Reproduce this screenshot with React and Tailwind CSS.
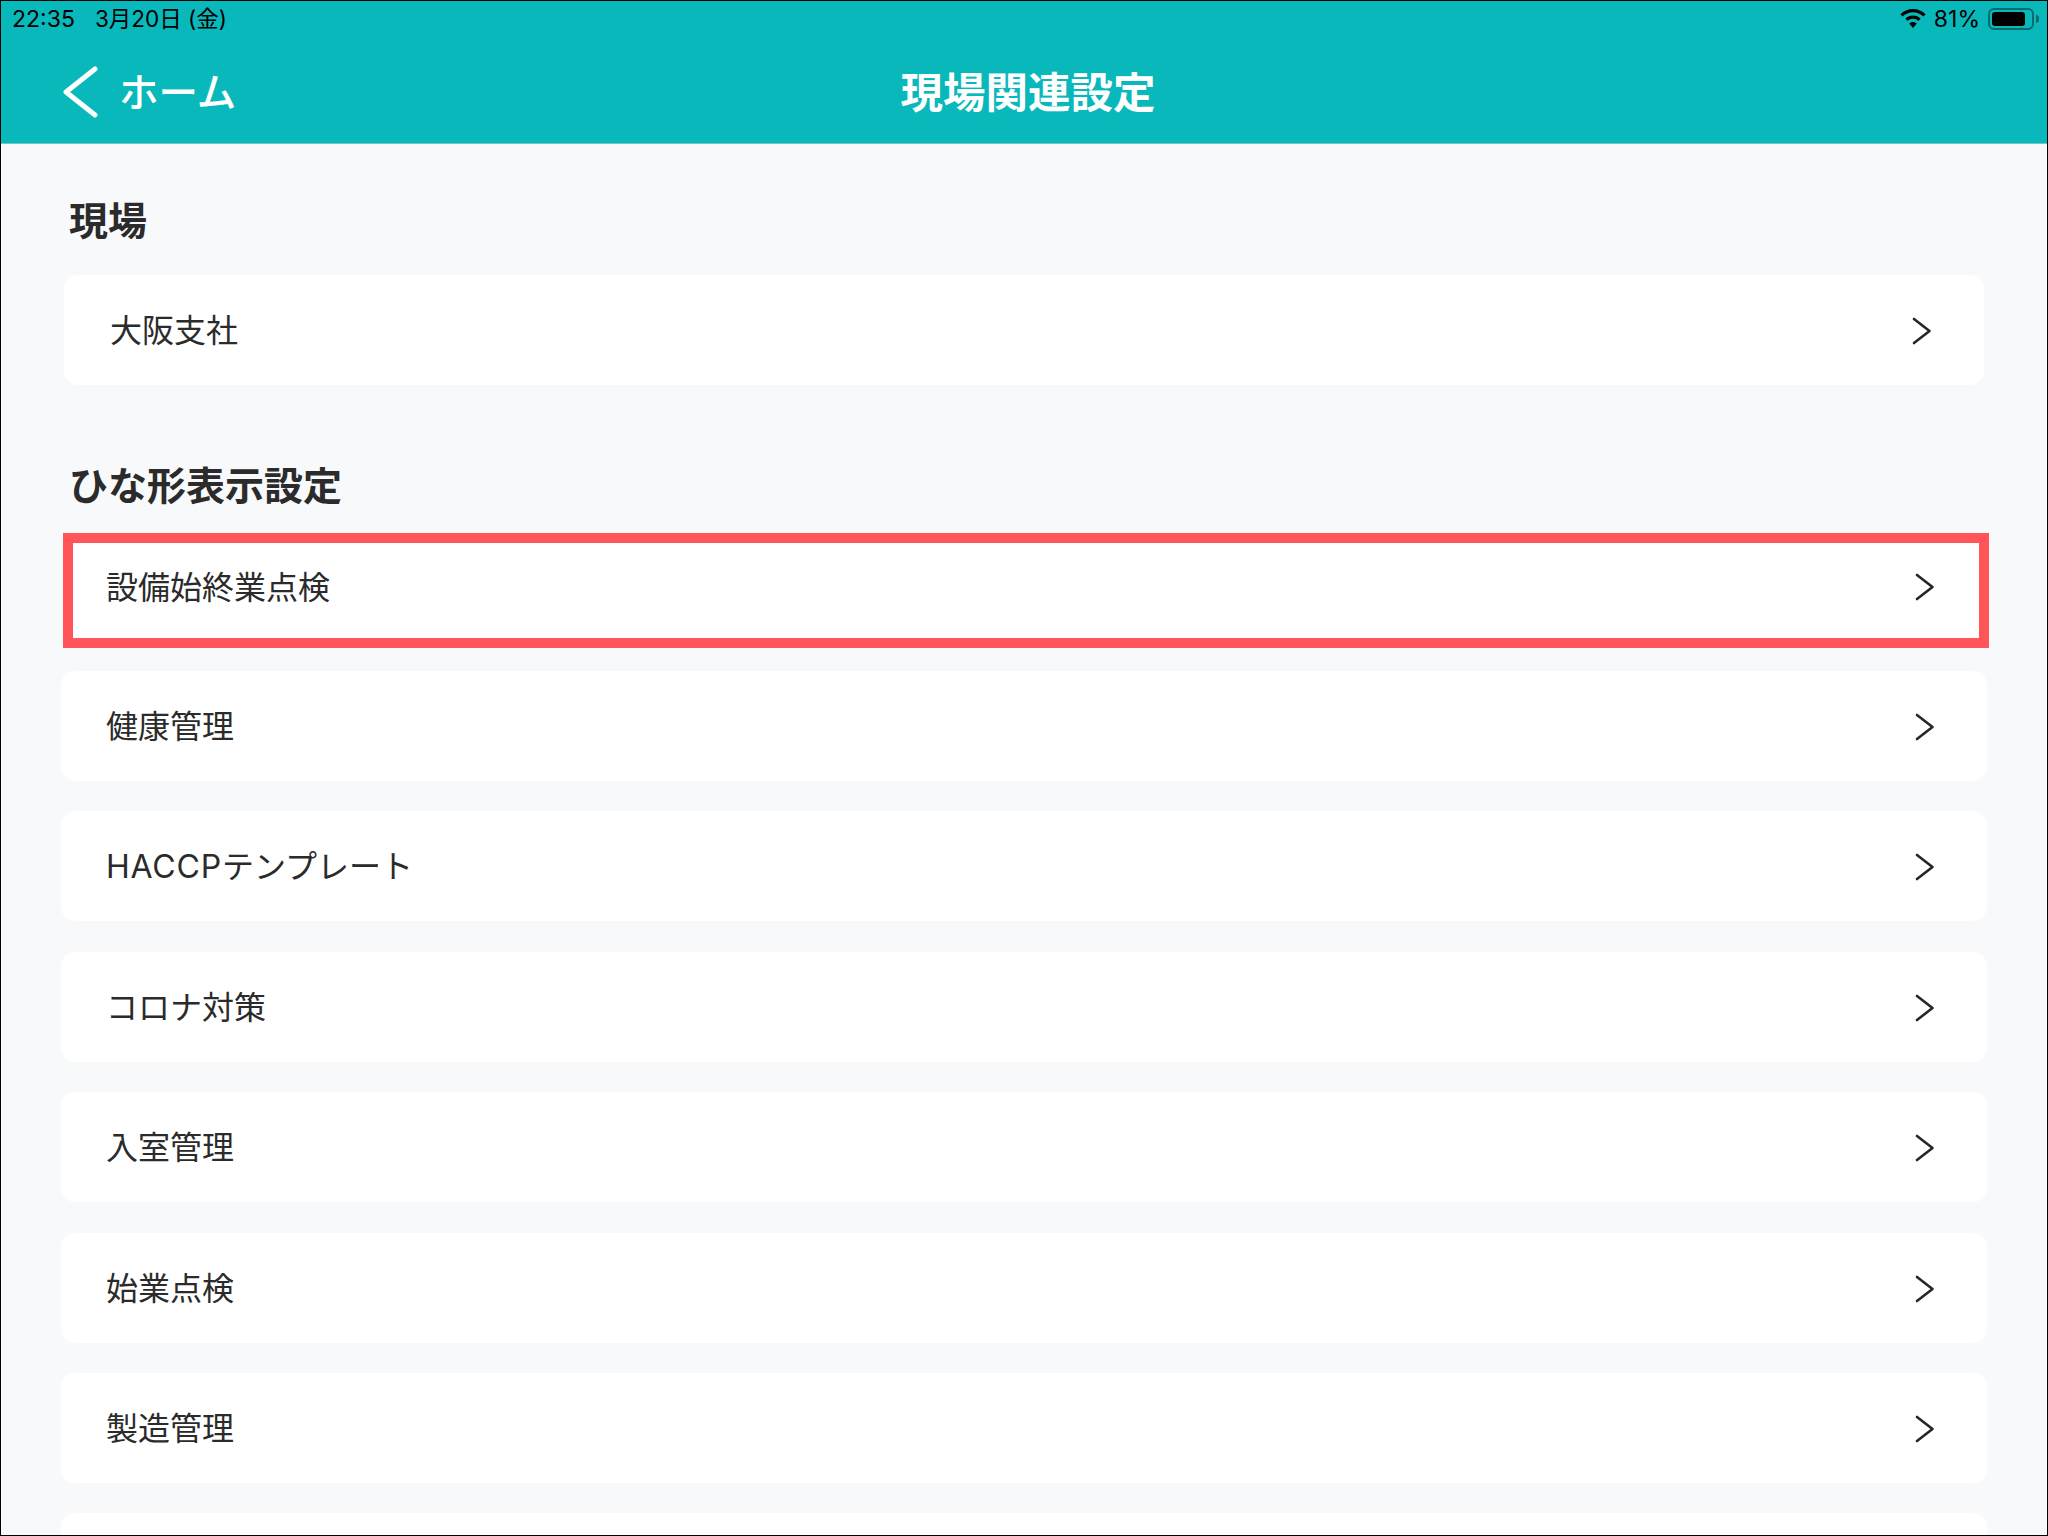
const Chevron = ({ className = "mt-[2px]" }) => (
  <svg width="20" height="28" viewBox="0 0 20 28" fill="none" className={`shrink-0 ${className}`}>
    <path d="M2 2 L17.5 14 L2 26" stroke="#262626" strokeWidth="2.6" strokeLinecap="round" strokeLinejoin="round" />
  </svg>
);

const Row = ({ label, className = "pl-[45px]" }) => (
  <div className={`flex items-center justify-between bg-white rounded-[14px] h-[110px] pr-[52px] ${className}`}>
    <span className="text-[32px] leading-none text-[#2b2b2b] pt-[2px]">{label}</span>
    <Chevron />
  </div>
);

const Wifi = () => (
  <svg width="26" height="20" viewBox="0 0 26 20" fill="#000">
    <path d="M13 0 C18 0 22.4 2 25.6 5.2 L23.4 7.6 C20.7 4.9 17 3.2 13 3.2 C9 3.2 5.3 4.9 2.6 7.6 L0.4 5.2 C3.6 2 8 0 13 0 Z" />
    <path d="M13 6.6 C15.9 6.6 18.6 7.8 20.6 9.7 L18.4 12 C17 10.7 15.1 9.8 13 9.8 C10.9 9.8 9 10.7 7.6 12 L5.4 9.7 C7.4 7.8 10.1 6.6 13 6.6 Z" />
    <path d="M13 13 C14.5 13 15.8 13.6 16.8 14.5 L13 19 L9.2 14.5 C10.2 13.6 11.5 13 13 13 Z" />
  </svg>
);

export default function App() {
  const rows = [
    "健康管理",
    <><span className="tracking-[0.8px]">HACCP</span>テンプレート</>,
    "コロナ対策",
    "入室管理",
    "始業点検",
    "製造管理",
  ];
  return (
    <div
      className="relative w-[2048px] h-[1536px] overflow-hidden bg-[#f8f9fb] border border-black flex flex-col"
      style={{ fontFamily: '"Inter", "Noto Sans CJK JP", "Noto Sans", sans-serif' }}
    >
      <header className="h-[143px] shrink-0 bg-[#08b8ba] flex flex-col border-b border-[#6fc9ca]">
        <div className="h-[36px] flex items-center justify-between pl-[11px] pr-[8px] text-black text-[23px] leading-none">
          <div className="flex items-center gap-[20px]">
            <span>22:35</span>
            <span className="text-[22.5px]">3月20日 (金)</span>
          </div>
          <div className="flex items-center">
            <Wifi />
            <span className="ml-[8px] mr-[8px]">81%</span>
            <div className="w-[46px] h-[22px] rounded-[6px] border-2 border-[#0a6b6d] p-[2px]">
              <div className="w-[33px] h-full rounded-[3px] bg-black" />
            </div>
            <div className="w-[3px] h-[8px] ml-[2px] rounded-r-sm bg-[#0a6b6d]" />
          </div>
        </div>
        <div className="relative flex-1 flex items-center justify-center pt-[6px] pl-[8px]">
          <div className="absolute left-[62px] top-[29px] flex items-center">
            <svg width="36" height="52" viewBox="0 0 36 52" fill="none">
              <path d="M32 3 L3 26 L32 49" stroke="#fff" strokeWidth="5" strokeLinecap="round" strokeLinejoin="round" />
            </svg>
            <span className="ml-[20px] mt-[4px] text-[39.5px] leading-none font-medium text-white">ホーム</span>
          </div>
          <span className="text-[42.5px] leading-none font-bold text-white">現場関連設定</span>
        </div>
      </header>
      <main className="flex-1 flex flex-col">
        <h2 className="mt-[57px] ml-[68px] text-[39px] leading-none font-bold text-[#2b2b2b]">現場</h2>
        <Row label="大阪支社" className="mt-[35px] ml-[63px] mr-[63px] pl-[46px]" />
        <h2 className="mt-[81px] ml-[68px] text-[39px] leading-none font-bold text-[#2b2b2b]">ひな形表示設定</h2>
        <div className="mt-[28px] ml-[62px] mr-[58px] h-[115px] flex items-center justify-between bg-white border-[10px] border-[#ff5558] pl-[33px] pr-[44px]">
          <span className="text-[32px] leading-none text-[#2b2b2b] pb-[6px]">設備始終業点検</span>
          <Chevron className="mb-[8px]" />
        </div>
        <div className="mt-[23px] ml-[60px] mr-[60px] flex flex-col gap-[30.4px]">
          {rows.map((r, i) => (
            <Row key={i} label={r} />
          ))}
          <Row label="" />
        </div>
      </main>
    </div>
  );
}
